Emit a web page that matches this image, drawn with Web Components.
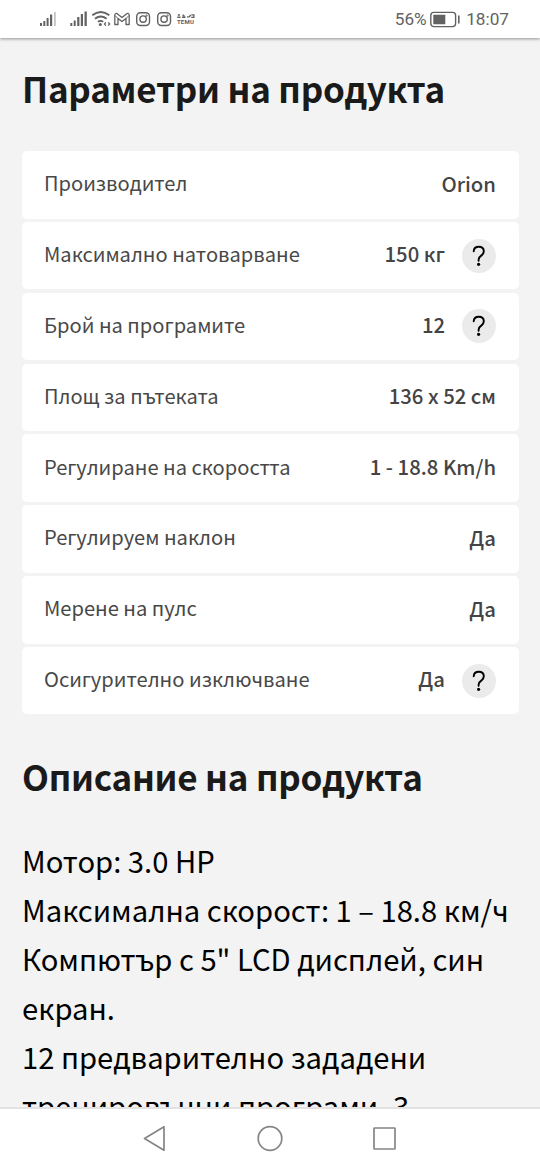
<!DOCTYPE html>
<html lang="bg">
<head>
<meta charset="utf-8">
<title>Параметри на продукта</title>
<style>
html,body{margin:0;height:100%;background:#f3f3f3}
</style>
</head>
<body>
<phone-screen>
  <status-bar slot="top"></status-bar>
  <section-title>Параметри на продукта</section-title>
  <param-list>
    <param-row value="Orion">Производител</param-row>
    <param-row value="150 кг" help>Максимално натоварване</param-row>
    <param-row value="12" help>Брой на програмите</param-row>
    <param-row value="136 x 52 см">Площ за пътеката</param-row>
    <param-row value="1 - 18.8 Km/h">Регулиране на скоростта</param-row>
    <param-row value="Да">Регулируем наклон</param-row>
    <param-row value="Да">Мерене на пулс</param-row>
    <param-row value="Да" help>Осигурително изключване</param-row>
  </param-list>
  <section-title>Описание на продукта</section-title>
  <product-text>
    <div>Мотор: 3.0 HP</div>
    <div>Максимална скорост: 1 – 18.8 км/ч</div>
    <div>Компютър с 5" LCD дисплей, син</div>
    <div>екран.</div>
    <div>12 предварително зададени</div>
    <div>тренировъчни програми, 3</div>
  </product-text>
  <nav-bar slot="bottom"></nav-bar>
</phone-screen>
<script>
const define = (name, html, setup) => {
  const t = document.createElement('template');
  t.innerHTML = html;
  customElements.define(name, class extends HTMLElement {
    constructor() {
      super();
      this.attachShadow({ mode: 'open' }).append(t.content.cloneNode(true));
    }
    connectedCallback() { if (setup) setup(this, this.shadowRoot); }
  });
};

define('phone-screen', `<style>
:host{display:flex;flex-direction:column;width:540px;height:1170px;overflow:hidden;background:#f3f3f3;font-family:"Noto Sans CJK SC",sans-serif}
main{flex:1;min-height:0;overflow:hidden;padding:25px 22px 0;box-sizing:border-box}
</style><slot name="top"></slot><main><slot></slot></main><slot name="bottom"></slot>`);

define('status-bar', `<style>
:host{display:flex;justify-content:space-between;height:38px;flex:none;background:#fff;box-shadow:0 1px 3px rgba(0,0,0,.4);position:relative;z-index:1;color:#626262;font:17.200px/39px Roboto,sans-serif}
svg{display:block}
.r{display:flex;align-items:center;padding-right:31px;height:39px}
.r svg{margin:0 5.500px 0 3px}
</style>
<svg width="210" height="38" fill="none" stroke="#626262">
  <g stroke="none" fill="#626262">
    <rect x="40" y="23" width="2" height="3"/><rect x="43.3" y="21" width="2" height="5"/><rect x="46.6" y="18" width="2" height="8"/><rect x="50" y="14.5" width="2.2" height="11.5"/>
    <rect x="54" y="12" width="1.8" height="14" fill="#c4c4c4"/>
    <rect x="70.3" y="23" width="2" height="3"/><rect x="73.7" y="20.5" width="2" height="5.500"/><rect x="77.2" y="17" width="2.2" height="9"/><rect x="80.800" y="14" width="2.200" height="12"/><rect x="84.500" y="11.500" width="2.300" height="14.500"/>
  </g>
  <path stroke-width="1.9" d="M92.300 15.300Q100.800 8.500 109.300 15.300M95 18.700Q100.800 14.200 106.600 18.700M97.900 21.800Q100.500 20 103.200 21.800"/>
  <circle cx="100.300" cy="24.600" r="1.500" fill="#626262" stroke="none"/>
  <path stroke-width="1.300" d="M105.800 22.300L104.500 24L105.800 25.700M108.300 22.300L109.600 24L108.300 25.700"/>
  <path stroke-width="1.300" stroke-linejoin="round" d="M114.800 24.500V14.800Q115.300 12.800 117.200 13.700L122 17.500L126.800 13.700Q128.700 12.800 129.200 14.800V24.500H126V18.500L122 21.600L118 18.500V24.500Z"/>
  <path stroke-width="1" d="M115 15.500L118 18.500M129 15.500L126 18.500"/>
  <g stroke-width="1.400">
    <rect x="136.700" y="12.700" width="12.800" height="12.800" rx="3.700"/><circle cx="143.100" cy="19.100" r="3.200"/><circle cx="146.600" cy="15.600" r=".4"/>
    <rect x="157.700" y="12.700" width="12.800" height="12.800" rx="3.700"/><circle cx="164.100" cy="19.100" r="3.200"/><circle cx="167.600" cy="15.600" r=".4"/>
  </g>
  <path stroke-width="1.400" d="M177.300 17.300H180.500M177.800 15H180M182 17.300H185.500M182.600 14.800L184.500 16.400M187 16.900H188.800M189.300 17.300L190.500 14.900M191.300 14.900H193.800V17.400H191.200"/>
  <text x="176.900" y="23.600" font-family="Roboto" font-size="6" font-weight="700" textLength="17" fill="#626262" stroke="none">TEMU</text>
</svg>
<div class="r"><span>56%</span>
<svg width="31" height="20" fill="none"><rect x=".8" y="2.400" width="24.800" height="14.200" rx="3" stroke="#626262" stroke-width="1.400"/><rect x="3.300" y="4.700" width="12" height="9.600" rx=".6" fill="#626262"/><rect x="28" y="5.500" width="1.600" height="8" fill="#626262"/></svg>
<span>18:07</span></div>`);

define('section-title', `<style>
:host{display:block;height:50px;font-size:35px;line-height:50px;font-weight:700;color:#1a1a1a;white-space:nowrap;letter-spacing:-.25px}
</style><slot></slot>`);

define('param-list', `<style>
:host{display:flex;flex-direction:column;gap:3.300px;margin:38px 0 36.500px}
</style><slot></slot>`);

define('param-row', `<style>
:host{display:flex;align-items:center;height:67.550px;box-sizing:border-box;background:#fff;border-radius:5px;padding:0 23px 0 22px;width:497px;font-size:20.130px;line-height:30px;color:#484848;white-space:nowrap}
.k{padding-bottom:3px}
.v{padding-bottom:4.500px;margin-left:auto;font-size:20.300px;font-weight:500;color:#444}
help-dot{margin-left:17px}
:host(:not([help])) help-dot{display:none}
</style><span class="k"><slot></slot></span><span class="v"></span><help-dot></help-dot>`,
(el, root) => { root.querySelector('.v').textContent = el.getAttribute('value'); });

define('help-dot', `<style>
:host{display:block;width:34px;height:34px}
svg{display:block}
</style><svg width="34" height="34" fill="none"><circle cx="17" cy="17" r="17" fill="#ebebeb"/><path d="M11.700 12.200Q12 7.700 16.800 7.700Q21.800 7.700 21.800 12.300Q21.800 14.500 19.500 16.400Q16.600 18.300 16.600 20.800V21.800" stroke="#000" stroke-width="1.900" stroke-linecap="round"/><circle cx="16.600" cy="25.300" r="1.600" fill="#000"/></svg>`);

define('product-text', `<style>
:host{display:block;margin-top:35.500px;font-size:29.200px;line-height:49px;color:#000;white-space:nowrap}
</style><slot></slot>`);

define('nav-bar', `<style>
:host{display:block;flex:none;height:63px;box-sizing:border-box;border-top:2px solid #e2e2e2;background:#fff}
svg{display:block}
</style><svg width="540" height="61" fill="none" stroke="#858585" stroke-width="1.700" stroke-linejoin="round"><path d="M144.500 29.500L164 17.800V41.200Z"/><circle cx="270" cy="29.500" r="11.800"/><rect x="374" y="19" width="21" height="21" rx=".6"/></svg>`);
</script>
</body>
</html>
